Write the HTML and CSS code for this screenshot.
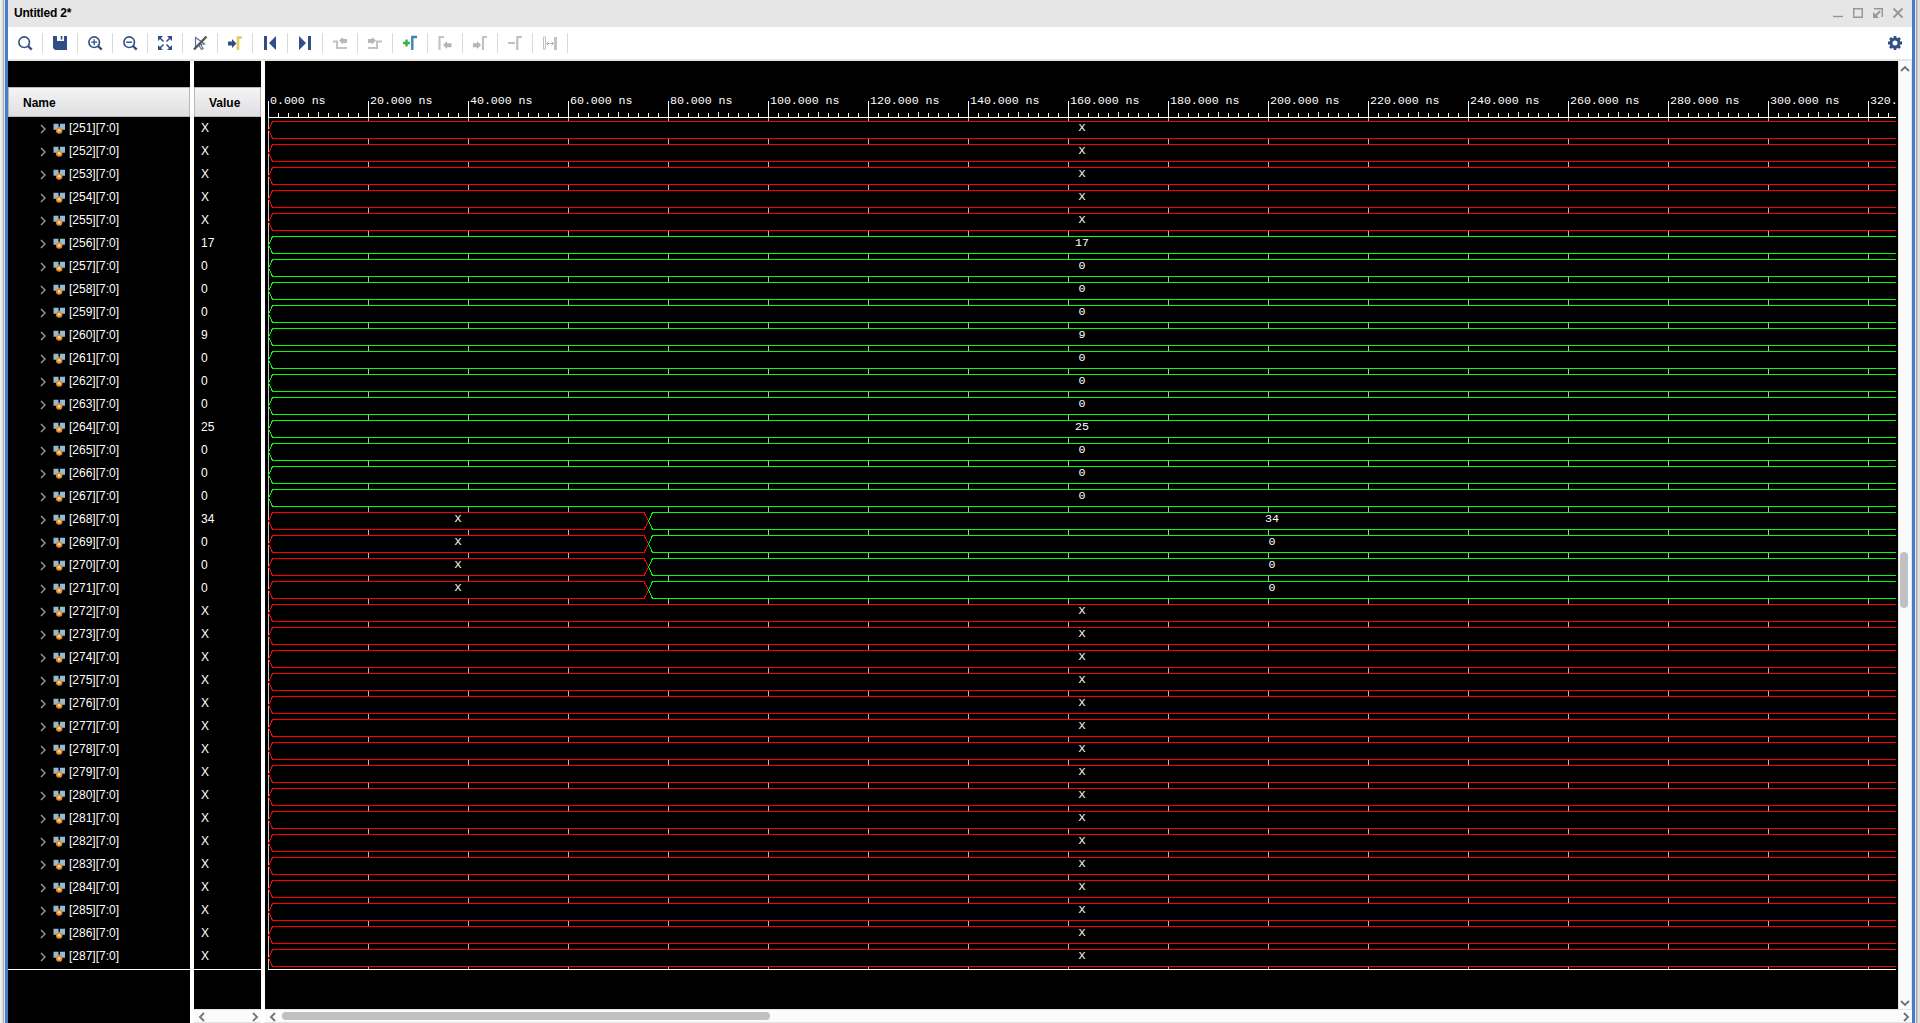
FILE: index.html
```html
<!DOCTYPE html>
<html lang="en">
<head>
<meta charset="utf-8">
<title>Untitled 2*</title>
<link rel="stylesheet" href="styles.css">
</head>
<body>
<div class="frame">
  <div class="edge edge-left"></div>
  <main class="window">
    <header class="titlebar">
      <span class="title">Untitled 2*</span>
      <svg class="window-buttons" width="72" height="14" viewBox="0 0 72 14">
        <g fill="none" stroke="#969696">
          <path d="M0 10.5h10" stroke-width="1.4"/>
          <path d="M20.7 2.7h8.6v8.6h-8.6z" stroke-width="1.4"/>
          <path d="M41 2.7h8.3v8.3" stroke-width="1.4"/>
          <path d="M47 5.2l-5 5" stroke-width="2"/>
          <path d="M60.5 2.5l9 9m0-9l-9 9" stroke-width="1.8"/>
        </g>
        <path d="M40 6v6h6z" fill="#969696"/>
      </svg>
    </header>
    <nav class="toolbar">
      <span class="tool"><svg viewBox="0 0 16 16"><circle cx="7.2" cy="7.2" r="5.3" fill="none" stroke="#314f86" stroke-width="1.6"/><path d="M11 11l3.7 3.7" stroke="#314f86" stroke-width="2.4"/></svg></span>
      <span class="tool"><svg viewBox="0 0 16 16"><path d="M1 1h4v5h7V1h3v14H3l-2-2z M8.8 1h1.6v3.5H8.8z" fill="#314f86"/></svg></span>
      <span class="tool"><svg viewBox="0 0 16 16"><circle cx="7.2" cy="7.2" r="5.3" fill="none" stroke="#314f86" stroke-width="1.6"/><path d="M11 11l3.7 3.7" stroke="#314f86" stroke-width="2.4"/><path d="M4.2 7.2h6M7.2 4.2v6" stroke="#314f86" stroke-width="1.3"/></svg></span>
      <span class="tool"><svg viewBox="0 0 16 16"><circle cx="7.2" cy="7.2" r="5.3" fill="none" stroke="#314f86" stroke-width="1.6"/><path d="M11 11l3.7 3.7" stroke="#314f86" stroke-width="2.4"/><path d="M4.2 7.2h6" stroke="#314f86" stroke-width="1.4"/></svg></span>
      <span class="tool"><svg viewBox="0 0 16 16"><path d="M1 1h5L1 6zM15 1v5l-5-5zM1 15v-5l5 5zM15 15h-5l5-5z" fill="#314f86"/><path d="M2 2l4.500 4.500M14 2L9.500 6.500M2 14l4.500-4.500M14 14L9.500 9.500" stroke="#314f86" stroke-width="1.500"/></svg></span>
      <span class="tool"><svg viewBox="0 0 16 16"><path d="M3.500 2.500v10l3-2.500 3 4.500 1.600-1-2.500-4 4-.6z" fill="none" stroke="#5b719d" stroke-width="1.200"/><path d="M14.500 1.500L2 14.500" stroke="#555" stroke-width="2.400"/></svg></span>
      <span class="tool"><svg viewBox="0 0 16 16"><path d="M1 6.500h4V4l4.500 4.500L5 13v-2.500H1z" fill="#314f86"/><path d="M15 2.500h-4V15" fill="none" stroke="#e4c964" stroke-width="2.700"/></svg></span>
      <span class="tool"><svg viewBox="0 0 16 16"><path d="M2 1h3v14H2zM14 1v14L7 8z" fill="#314f86"/></svg></span>
      <span class="tool"><svg viewBox="0 0 16 16"><path d="M2 1v14l7-7zM11 1h3v14h-3z" fill="#314f86"/></svg></span>
      <span class="tool"><svg viewBox="0 0 16 16"><path d="M1 6.500h4V13h10" fill="none" stroke="#c3c3c3" stroke-width="2"/><path d="M7 5.500l4-3.500v2h4v4h-4v1.500z" fill="#b8b8b8"/></svg></span>
      <span class="tool"><svg viewBox="0 0 16 16"><path d="M1 13h9V6.500h5" fill="none" stroke="#c3c3c3" stroke-width="2"/><path d="M9 5.500L5 2v2H1v4h4v1.500z" fill="#b8b8b8"/></svg></span>
      <span class="tool"><svg viewBox="0 0 16 16"><path d="M1 8h7M4.500 4.500v7" stroke="#3fae49" stroke-width="2.400"/><path d="M15 2H10.300v13" fill="none" stroke="#3c83b8" stroke-width="2.400"/></svg></span>
      <span class="tool"><svg viewBox="0 0 16 16"><path d="M7 2H2.500v13" fill="none" stroke="#c3c3c3" stroke-width="2.200"/><path d="M6 10l4-4v2.200h4.500v4H10V14z" fill="#b5b5b5"/></svg></span>
      <span class="tool"><svg viewBox="0 0 16 16"><path d="M15 2h-4v13" fill="none" stroke="#c3c3c3" stroke-width="2.200"/><path d="M9 10L5 6v2.200H1v4h4V14z" fill="#b5b5b5"/></svg></span>
      <span class="tool"><svg viewBox="0 0 16 16"><path d="M1 8h7M15 2h-4.700v13" fill="none" stroke="#c0c0c0" stroke-width="2.200"/></svg></span>
      <span class="tool"><svg viewBox="0 0 16 16"><path d="M1.500 2h2v12h-2z" fill="none" stroke="#c0c0c0"/><path d="M12 2h3v13h-3z" fill="#c3c3c3"/><path d="M4.500 8.500h7M6.500 6.500l-2 2 2 2M9.500 6.500l2 2-2 2" fill="none" stroke="#b5b5b5"/></svg></span>
      <span class="settings"><svg viewBox="0 0 16 16"><circle cx="8" cy="8" r="4" fill="none" stroke="#314f86" stroke-width="3"/><path d="M8 1v3M8 12v3M1 8h3M12 8h3M3 3l2 2M11 11l2 2M13 3l-2 2M3 13l2-2" stroke="#314f86" stroke-width="2.800"/></svg></span>
    </nav>
    <section class="viewer">
      <div class="column names">
        <div class="heading name-heading">Name</div>
        <div class="rows" id="names"></div>
      </div>
      <div class="column values">
        <div class="heading value-heading">Value</div>
        <div class="rows" id="values"></div>
        <div class="hscroll">
          <svg width="8" height="10" viewBox="0 0 8 10"><path d="M6 1L2 5l4 4"/></svg>
          <svg width="8" height="10" viewBox="0 0 8 10"><path d="M2 1l4 4-4 4"/></svg>
        </div>
      </div>
      <div class="wave-pane">
        <div class="wave-main">
          <svg class="waves" id="waves" width="1633" height="948"></svg>
          <div class="vscroll">
            <svg width="10" height="8" viewBox="0 0 10 8"><path d="M1 6l4-4 4 4"/></svg>
            <span class="vthumb"></span>
            <svg width="10" height="8" viewBox="0 0 10 8"><path d="M1 2l4 4 4-4"/></svg>
          </div>
        </div>
        <div class="hscroll">
          <svg width="8" height="10" viewBox="0 0 8 10"><path d="M6 1L2 5l4 4"/></svg>
          <span class="hthumb"></span>
          <svg width="8" height="10" viewBox="0 0 8 10"><path d="M2 1l4 4-4 4"/></svg>
        </div>
      </div>
    </section>
  </main>
  <div class="edge edge-right"></div>
</div>
<script src="script.js"></script>
</body>
</html>
```
FILE: styles.css
```css
* { box-sizing: border-box; }
body {
  margin: 0;
  height: 1023px;
  overflow: hidden;
  background: #fff;
  font: 12px "Liberation Sans", Arial, sans-serif;
}
svg { display: block; flex: none; }
.frame { display: flex; height: 1023px; }
.edge { flex: none; }
.edge-left {
  width: 8px;
  background: linear-gradient(to right, #f0f0f0 0 1px, #e2e2e2 1px 3px, #a8a8a8 3px 4px, #e8e8e8 4px 5px, #4a7bcb 5px 8px);
}
.edge-right {
  width: 8px;
  background: linear-gradient(to right, #4a7bcb 0 3px, #e8e8e8 3px 4px, #aaa 4px 5px, #c8c8c8 5px 6px, #e0e0e0 6px 8px);
}
.window { flex: 1; display: flex; flex-direction: column; min-width: 0; }
.titlebar {
  display: flex;
  justify-content: space-between;
  height: 27px;
  padding: 0 7px 0 6px;
  background: #e6e6e6;
}
.title { font-weight: bold; line-height: 27px; letter-spacing: -0.2px; color: #000; }
.window-buttons { margin-top: 6px; }
.toolbar {
  display: flex;
  align-items: center;
  height: 34px;
  background: #fff;
  border-bottom: 2px solid #e6e6e6;
}
.toolbar svg { width: 16px; height: 16px; }
.tool {
  display: flex;
  align-items: center;
  justify-content: center;
  width: 35px;
  height: 20px;
  border-right: 1px solid #d9d9d9;
}
.settings { margin-left: auto; margin-right: 9px; }
.viewer { flex: 1; display: flex; gap: 4px; background: #fff; }
.column { display: flex; flex-direction: column; background: #000; color: #fff; }
.names { width: 182px; }
.values { width: 67px; }
.heading {
  height: 30px;
  margin-top: 26px;
  border: 1px solid #b8b8b8;
  background: linear-gradient(#f4f4f4, #dfdfe2);
  color: #000;
  font-weight: bold;
  line-height: 31px;
}
.name-heading { padding-left: 14px; }
.value-heading { padding-left: 14px; }
.rows { margin-top: 1px; border-bottom: 1px solid #fff; }
.row { display: flex; align-items: center; height: 23px; padding-bottom: 2px; line-height: 21px; }
.chevron { margin-left: 32px; }
.bus-icon { margin: 0 3px 0 7px; }
.values .row { padding-left: 7px; }
.hscroll {
  display: flex;
  align-items: center;
  height: 14px;
  padding: 2px 2px 0 4px;
  margin-top: auto;
  background: #fbfbfb;
  border-top: 1px solid #e4e4e4;
  border-bottom: 1px solid #e4e4e4;
}
.hscroll svg:last-child { margin-left: auto; }
.hscroll path, .vscroll path { fill: none; stroke: #757575; stroke-width: 1.9; }
.hthumb { width: 488px; height: 8px; margin: -3px 0 0 5px; border-radius: 4px; background: #c1c1c1; }
.wave-pane { width: 1647px; display: flex; flex-direction: column; }
.wave-main { display: flex; height: 948px; }
.waves { background: #000; }
.vscroll {
  display: flex;
  flex-direction: column;
  align-items: center;
  width: 14px;
  padding: 4px 0 2px;
  background: #fbfbfb;
  border-left: 1px solid #e4e4e4;
  border-right: 1px solid #e4e4e4;
}
.vscroll svg:last-child { margin-top: auto; }
.vthumb { width: 8px; height: 56px; margin-top: 479px; margin-right: 2px; border-radius: 4px; background: #c1c1c1; }
.ruler { stroke: #fff; }
.grid { stroke: #bdbdbd; }
.unknown { stroke: #f00; }
.known { stroke: #0f0; }
.ruler, .grid, .unknown, .known { fill: none; shape-rendering: crispEdges; }
.waves text { font: 11.67px "Liberation Mono", "Courier New", monospace; fill: #fff; }
```
FILE: script.js
```js
const FIRST = 251, COUNT = 37, PITCH = 23;
const START = 3, END = 1631, CHANGE = 383;
const fixed = { 256: "17", 260: "9", 264: "25", 268: "34" };
const names = document.getElementById("names");
const values = document.getElementById("values");
const waves = document.getElementById("waves");

const icons = `<svg class="chevron" width="6" height="10" viewBox="0 0 6 10"><path d="M1 1l4 4-4 4" fill="none" stroke="#9a9a9a" stroke-width="1.4"/></svg>
<svg class="bus-icon" width="13" height="12" viewBox="0 0 13 12"><path d="M4 3.500h5v4H4z" fill="#5f6e78"/><path d="M.5 .8h5v6h-5zM7 .8h5v6H7z" fill="#93bcd2"/><circle cx="6.200" cy="7.600" r="3.200" fill="#e58c27"/><circle cx="6.200" cy="7.400" r="1.400" fill="#ffd79c"/></svg>`;

let nameRows = "", valueRows = "", art = "", grid = "", ruler = "";

// Time ruler: one tick every 2 ns, labelled every 20 ns.
for (let x = START, i = 0; x < END; x += 10, i++) {
  const top = i % 10 === 0 ? 40 : i % 5 === 0 ? 51 : 52;
  ruler += `M${x + .5} ${top}V57`;
  if (i % 10 === 0) {
    const label = i === 160 ? "320." : `${i * 2}.000 ns`;
    art += `<text x="${x + 2}" y="43" textLength="${label.length * 6.95}">${label}</text>`;
    grid += `M${x + .5} 57V60`;
  }
}
ruler += `M${START} 56.5H${END}M${START} 908.5H${END}`;
grid += `M${START + .5} 57V908`;

function caption(from, to, y, text) {
  return `<text x="${(from + to) / 2}" y="${y}" text-anchor="middle">${text}</text>`;
}

for (let i = 0; i < COUNT; i++) {
  const id = FIRST + i, top = 57 + i * PITCH;
  const known = id >= 256 && id <= 271;
  const value = known ? fixed[id] || "0" : "X";
  nameRows += `<div class="row">${icons}<span>[${id}][7:0]</span></div>`;
  valueRows += `<div class="row">${value}</div>`;

  const a = top + 3.5, b = top + 20.5, mid = top + 12;
  for (let x = START + 100; x < END; x += 100) {
    grid += `M${x + .5} ${top + 21}V${Math.min(top + 26, 908)}`;
  }
  const lead = `M${END} ${a}H${START + 4.5}L${START + .5} ${mid}L${START + 4.5} ${b}H${END}`;
  if (id >= 268 && id <= 271) {
    art += `<path class="unknown" d="M${CHANGE - 4} ${a}H${START + 4.5}L${START + .5} ${mid}L${START + 4.5} ${b}H${CHANGE - 4}M${CHANGE - 4} ${a}L${CHANGE + .5} ${mid}L${CHANGE - 4} ${b}"/>`;
    art += `<path class="known" d="M${END} ${a}H${CHANGE + 4.5}L${CHANGE + .5} ${mid}L${CHANGE + 4.5} ${b}H${END}"/>`;
    art += caption(START, CHANGE, top + 13, "X") + caption(CHANGE, END, top + 13, value);
  } else {
    art += `<path class="${known ? "known" : "unknown"}" d="${lead}"/>` + caption(START, END, top + 13, value);
  }
}

names.innerHTML = nameRows;
values.innerHTML = valueRows;
waves.innerHTML = `<path class="grid" d="${grid}"/><path class="ruler" d="${ruler}"/>${art}`;
```
